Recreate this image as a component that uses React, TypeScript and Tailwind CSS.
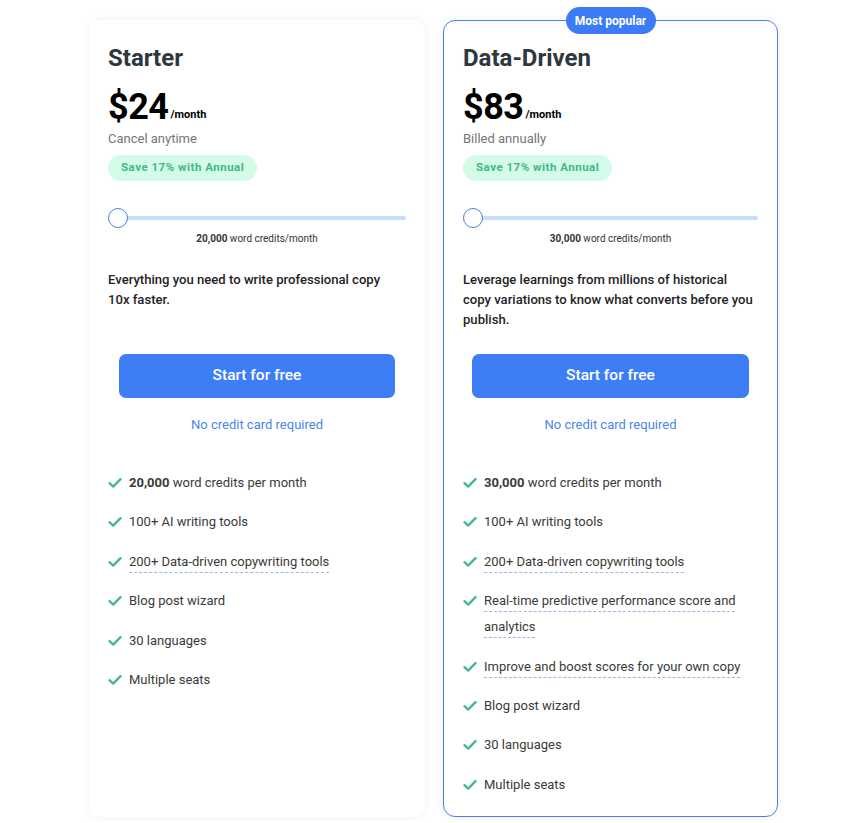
import React from "react"

type Feature = { bold?: string; text: string; dashed?: boolean }

interface Plan {
  name: string
  price: string
  note: string
  credits: string
  description: string
  features: Feature[]
  popular?: boolean
}

const plans: Plan[] = [
  {
    name: "Starter",
    price: "$24",
    note: "Cancel anytime",
    credits: "20,000",
    description: "Everything you need to write professional copy 10x faster.",
    features: [
      { bold: "20,000", text: " word credits per month" },
      { text: "100+ AI writing tools" },
      { text: "200+ Data-driven copywriting tools", dashed: true },
      { text: "Blog post wizard" },
      { text: "30 languages" },
      { text: "Multiple seats" },
    ],
  },
  {
    name: "Data-Driven",
    price: "$83",
    note: "Billed annually",
    credits: "30,000",
    description:
      "Leverage learnings from millions of historical copy variations to know what converts before you publish.",
    popular: true,
    features: [
      { bold: "30,000", text: " word credits per month" },
      { text: "100+ AI writing tools" },
      { text: "200+ Data-driven copywriting tools", dashed: true },
      { text: "Real-time predictive performance score and analytics", dashed: true },
      { text: "Improve and boost scores for your own copy", dashed: true },
      { text: "Blog post wizard" },
      { text: "30 languages" },
      { text: "Multiple seats" },
    ],
  },
]

function Check() {
  return (
    <svg width="14" height="14" viewBox="0 0 14 14" className="mt-[6px] shrink-0">
      <path d="M1.5 7.2 L5.2 10.6 L12.5 3.2" fill="none" stroke="#43bb8a" strokeWidth="2.4" strokeLinecap="round" strokeLinejoin="round" />
    </svg>
  )
}

function PlanCard({ plan }: { plan: Plan }) {
  return (
    <div
      className={
        "relative bg-white rounded-[12px] shadow-[0_0_8px_rgba(0,0,0,0.06)] pb-[18px] px-[19px] " +
        (plan.popular ? "w-[335px] border border-[#4a82e6] pt-[21px]" : "w-[336px] pt-[22px]")
      }
    >
      {plan.popular && (
        <div className="absolute -top-[14px] left-1/2 -translate-x-1/2 bg-[#3b7cf6] text-white text-[12px] font-bold rounded-full h-[27px] w-[90px] flex items-center justify-center">
          Most popular
        </div>
      )}
      <h2 className="text-[24px] leading-[32px] font-bold text-[#2e373d]">{plan.name}</h2>
      <div className="flex items-end mt-[15px] h-[36px]">
        <span className="text-[36px] leading-[36px] font-bold text-black tracking-[-0.5px]">{plan.price}</span>
        <span className="text-[11px] font-bold text-black ml-[2px] mb-[2px]">/month</span>
      </div>
      <p className="text-[13px] text-[#757575] mt-[5px] leading-[18px]">{plan.note}</p>
      <div className="mt-[7px] inline-flex items-center h-[26px] px-[13px] rounded-full bg-[#d4fbe8] text-[#3dba84] text-[11.5px] font-bold tracking-[0.5px]">
        Save 17% with Annual
      </div>
      <div className="relative mt-[27px] h-[20px] flex items-center">
        <div className="h-[4px] w-full bg-[#c8dcfb] rounded-full" />
        <div className="absolute left-0 top-0 w-[20px] h-[20px] rounded-full bg-white border-[1.5px] border-[#4a7fe0]" />
      </div>
      <p className="text-center text-[10px] leading-[14px] text-[#333] mt-[4px]">
        <span className="font-bold">{plan.credits}</span> word credits/month
      </p>
      <p className="mt-[24px] max-w-[293px] text-[13.1px] leading-[20px] font-medium text-[#1f2328] h-[60px]">
        {plan.description}
      </p>
      <div className={"mt-[24px] " + (plan.popular ? "px-[9px]" : "px-[11px]")}>
        <button className="w-full h-[44px] rounded-[7px] bg-[#3d7ef6] text-white text-[15.5px] font-medium">
          Start for free
        </button>
      </div>
      <p className="text-center text-[13px] text-[#4a86e8] mt-[18px] leading-[18px]">No credit card required</p>
      <ul className="mt-[36px] flex flex-col gap-[13.4px]">
        {plan.features.map((f, i) => (
          <li key={i} className="flex gap-[7px] text-[13px] leading-[26px] text-[#3a3a3a]">
            <Check />
            <span
              className={
                f.dashed
                  ? "underline decoration-dashed decoration-[#9fb5e2] underline-offset-[6px] decoration-1"
                  : ""
              }
            >
              {f.bold && <span className="font-bold">{f.bold}</span>}
              {f.text}
            </span>
          </li>
        ))}
      </ul>
    </div>
  )
}

export default function App() {
  return (
    <div className="min-h-screen bg-white font-['Roboto',sans-serif] pl-[89px] pt-[20px] pb-[6px]">
      <div className="flex gap-[18px] items-stretch">
        {plans.map((p) => (
          <PlanCard key={p.name} plan={p} />
        ))}
      </div>
    </div>
  )
}
